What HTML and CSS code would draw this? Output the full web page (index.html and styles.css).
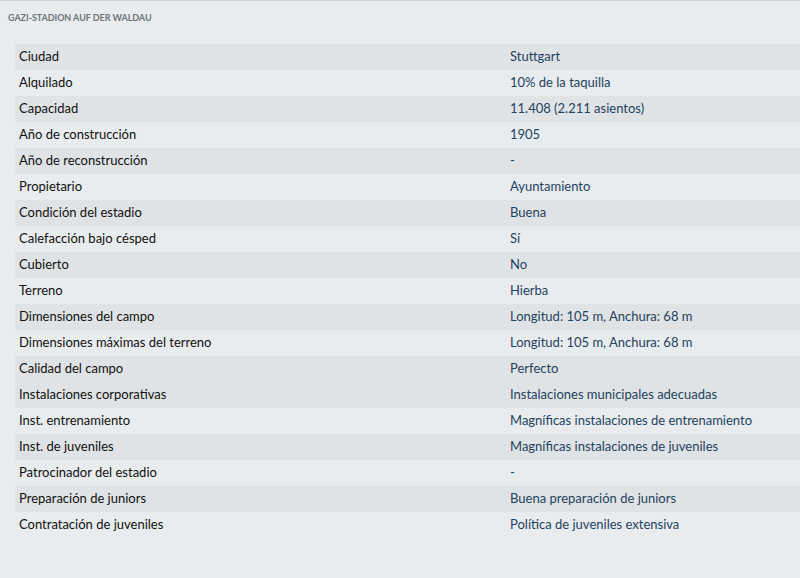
FILE: index.html
```html
<!DOCTYPE html>
<html lang="es">
<head>
  <meta charset="UTF-8">
  <title>Gazi-Stadion auf der Waldau</title>
  <link rel="stylesheet" href="styles.css">
</head>
<body>
  <div class="panel">
    <h2 class="panel-title">GAZI-STADION AUF DER WALDAU</h2>
    <div class="info-table">
      <div class="row shade"><span class="label">Ciudad</span><span class="value">Stuttgart</span></div>
      <div class="row"><span class="label">Alquilado</span><span class="value">10% de la taquilla</span></div>
      <div class="row shade"><span class="label">Capacidad</span><span class="value">11.408 (2.211 asientos)</span></div>
      <div class="row"><span class="label">Año de construcción</span><span class="value">1905</span></div>
      <div class="row shade"><span class="label">Año de reconstrucción</span><span class="value">-</span></div>
      <div class="row"><span class="label">Propietario</span><span class="value">Ayuntamiento</span></div>
      <div class="row shade"><span class="label">Condición del estadio</span><span class="value">Buena</span></div>
      <div class="row"><span class="label">Calefacción bajo césped</span><span class="value">Sí</span></div>
      <div class="row shade"><span class="label">Cubierto</span><span class="value">No</span></div>
      <div class="row"><span class="label">Terreno</span><span class="value">Hierba</span></div>
      <div class="row shade"><span class="label">Dimensiones del campo</span><span class="value">Longitud: 105 m, Anchura: 68 m</span></div>
      <div class="row"><span class="label">Dimensiones máximas del terreno</span><span class="value">Longitud: 105 m, Anchura: 68 m</span></div>
      <div class="row shade"><span class="label">Calidad del campo</span><span class="value">Perfecto</span></div>
      <div class="row shade"><span class="label">Instalaciones corporativas</span><span class="value">Instalaciones municipales adecuadas</span></div>
      <div class="row"><span class="label">Inst. entrenamiento</span><span class="value">Magníficas instalaciones de entrenamiento</span></div>
      <div class="row shade"><span class="label">Inst. de juveniles</span><span class="value">Magníficas instalaciones de juveniles</span></div>
      <div class="row"><span class="label">Patrocinador del estadio</span><span class="value">-</span></div>
      <div class="row shade"><span class="label">Preparación de juniors</span><span class="value">Buena preparación de juniors</span></div>
      <div class="row"><span class="label">Contratación de juveniles</span><span class="value">Política de juveniles extensiva</span></div>
    </div>
  </div>
</body>
</html>
```

FILE: styles.css
```css
html, body {
  margin: 0;
  padding: 0;
  background-color: #e8ecee;
}
body {
  font-family: Lato, "Open Sans", sans-serif;
  height: 578px;
  overflow: hidden;
}
.panel {
  border-top: 1px solid #cfd4d8;
  height: 577px;
}
.panel-title {
  margin: 0;
  padding: 11px 0 0 8px;
  height: 43px;
  box-sizing: border-box;
  font-size: 9px;
  font-weight: 700;
  color: #6f7479;
  letter-spacing: -0.05px;
}
.info-table {
  margin-left: 15px;
}
.row {
  display: flex;
  height: 26px;
  box-sizing: border-box;
  padding-bottom: 2px;
  align-items: center;
  font-size: 13px;
}
.row.shade {
  background-color: #e0e3e5; /* franja */
}
.label {
  width: 491px;
  padding-left: 4px;
  color: #111;
}
.value {
  color: #1f4260;
}
```
